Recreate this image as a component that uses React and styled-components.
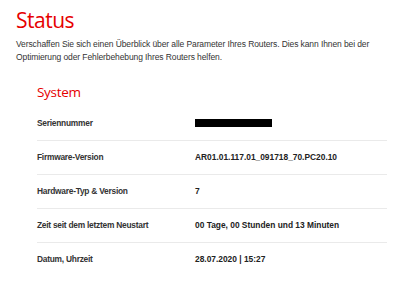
import React from 'react';
import styled, { createGlobalStyle } from 'styled-components';

const GlobalStyle = createGlobalStyle`
  body {
    margin: 0;
    background: #fff;
    font-family: "Liberation Sans", Arial, sans-serif;
  }
`;

const Page = styled.div`
  padding: 8px 16px 0 16px;
`;

const Title = styled.h1`
  margin: 0;
  font-family: "Open Sans", "Noto Sans", sans-serif;
  font-weight: 400;
  font-size: 21px;
  line-height: 24px;
  color: #e60000;
  letter-spacing: -0.5px;
`;

const Intro = styled.p`
  margin: 5.5px 0 0 0;
  max-width: 362px;
  font-size: 8.5px;
  line-height: 13px;
  letter-spacing: -0.1px;
  color: #333;
`;

const Section = styled.section`
  margin: 20px 0 0 21px;
  width: 350px;
`;

const SectionTitle = styled.h2`
  margin: 0;
  font-family: "Open Sans", "Noto Sans", sans-serif;
  font-weight: 400;
  font-size: 13.5px;
  line-height: 16px;
  color: #e60000;
  letter-spacing: -0.3px;
`;

const Table = styled.div`
  margin-top: 6px;
`;

const Row = styled.div`
  display: grid;
  grid-template-columns: 158px 1fr;
  align-items: center;
  height: 34px;
  border-top: ${({ first }) => (first ? 'none' : '1px solid #eaeaea')};
  box-sizing: border-box;
`;

const Label = styled.span`
  font-size: 8.4px;
  font-weight: 700;
  letter-spacing: -0.25px;
  color: #333;
`;

const Value = styled.span`
  font-size: 8.4px;
  font-weight: 700;
  color: #222;
`;

const Redacted = styled.span`
  display: block;
  width: 77px;
  height: 8px;
  background: #000;
`;

const rows = [
  { label: 'Seriennummer', value: null },
  { label: 'Firmware-Version', value: 'AR01.01.117.01_091718_70.PC20.10' },
  { label: 'Hardware-Typ & Version', value: '7' },
  { label: 'Zeit seit dem letztem Neustart', value: '00 Tage, 00 Stunden und 13 Minuten' },
  { label: 'Datum, Uhrzeit', value: '28.07.2020 | 15:27' },
];

export default function App() {
  return (
    <>
      <GlobalStyle />
      <Page>
        <Title>Status</Title>
        <Intro>
          Verschaffen Sie sich einen Überblick über alle Parameter Ihres Routers. Dies kann Ihnen bei der
          Optimierung oder Fehlerbehebung Ihres Routers helfen.
        </Intro>
        <Section>
          <SectionTitle>System</SectionTitle>
          <Table>
            {rows.map((r, i) => (
              <Row key={r.label} first={i === 0}>
                <Label>{r.label}</Label>
                {r.value === null ? <Redacted /> : <Value>{r.value}</Value>}
              </Row>
            ))}
          </Table>
        </Section>
      </Page>
    </>
  );
}
